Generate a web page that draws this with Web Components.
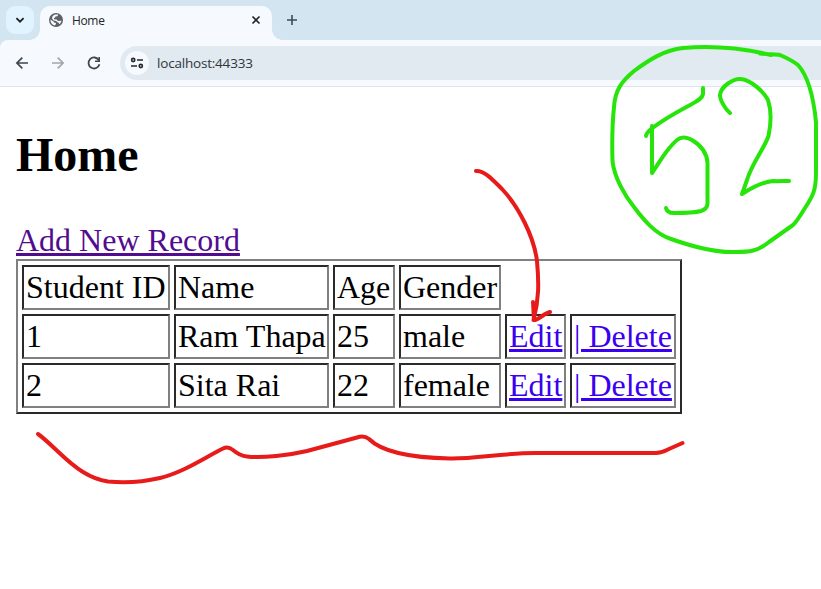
<!DOCTYPE html>
<html lang="en">
<head>
<meta charset="utf-8">
<title>Home</title>
<style>
html,body{margin:0;width:821px;height:589px;overflow:hidden;background:#fff}
</style>
</head>
<body>
<student-screen></student-screen>
<script>
const define = (name, html) => {
  const t = document.createElement('template');
  t.innerHTML = html;
  customElements.define(name, class extends HTMLElement {
    constructor() {
      super();
      this.attachShadow({mode: 'open'}).appendChild(t.content.cloneNode(true));
    }
  });
};

define('browser-tab', `
<style>
:host{display:flex;align-items:center;position:relative;box-sizing:border-box;width:232px;height:34px;padding:0 9px 6px;background:#f6fafe;border-radius:10px 10px 0 0;color:#1f2327}
:host::before,:host::after{content:"";position:absolute;bottom:0;width:10px;height:10px}
:host::before{left:-10px;background:radial-gradient(circle at 0 0,transparent 9.5px,#f6fafe 10px)}
:host::after{right:-10px;background:radial-gradient(circle at 100% 0,transparent 9.5px,#f6fafe 10px)}
svg{display:block}
.title{flex:1;margin-left:9px;padding-top:2px;font:12px/16px "Open Sans",sans-serif;letter-spacing:-.35px}
.close{margin-right:2px}
</style>
<svg width="14" height="14" viewBox="0 0 14 14"><circle cx="7" cy="7" r="7" fill="#5c6166"/><path d="M1.4 6.6 4.5 8.6 5.1 9.6 7 10.1 6.9 11.1 6 12.6 C3 12 1.3 9.6 1.4 6.6ZM6.1 1.6 C8 1.3 8.6 1.4 9.3 1.8 L8.3 3.2 6.5 3.5 5.9 4.8 4.8 5.3 5 6.3 7.7 6.4 8.5 7.7 10.4 8 12.4 7.5 C12.3 9 11.5 10.4 10.3 11.3 L9.7 9.7 8 9.1 7.3 8 4.5 7.6 2.9 5.2 C3.4 3.3 4.5 2.1 6.1 1.6Z" fill="#f6fafe"/></svg>
<span class="title"><slot></slot></span>
<svg class="close" width="10" height="10" viewBox="0 0 10 10"><path d="M1.5 1.5l7 7m0-7l-7 7" stroke="#24282c" stroke-width="1.7"/></svg>`);

define('tab-strip', `
<style>
:host{display:flex;box-sizing:border-box;height:40px;padding:6px 0 0 6px;background:#d3e5f1}
.search{width:28px;height:28px;border-radius:9px;background:#e1f3ff;margin-right:6px;display:grid;place-items:center}
.add{margin:8px 0 0 14px}
svg{display:block}
</style>
<div class="search"><svg width="10" height="8" viewBox="0 0 10 8"><path d="M1.4 2.2 5 5.7 8.6 2.2" fill="none" stroke="#1c2024" stroke-width="1.8"/></svg></div>
<slot></slot>
<svg class="add" width="12" height="12" viewBox="0 0 12 12"><path d="M6 1v10M1 6h10" stroke="#414b52" stroke-width="1.6"/></svg>`);

define('address-bar', `
<style>
:host{display:flex;align-items:center;flex:1;height:34px;box-sizing:border-box;padding-left:5px;border-radius:17px 0 0 17px;background:#e0eaf0}
.site{width:24px;height:24px;border-radius:50%;background:#f6fafe;display:grid;place-items:center}
.url{margin-left:8px;font:13.5px/20px "Open Sans",sans-serif;letter-spacing:-.2px;color:#30363c}
</style>
<div class="site"><svg width="14" height="12" viewBox="0 0 14 12" fill="none" stroke="#24282c" stroke-width="1.6"><circle cx="3.2" cy="3" r="1.6"/><path d="M7 3h6M1 9h6"/><circle cx="10.8" cy="9" r="1.6"/></svg></div>
<span class="url"><slot></slot></span>`);

define('tool-bar', `
<style>
:host{display:block;background:#d3e5f1}
.bar{display:flex;align-items:center;height:46px;border-bottom:1px solid #dce5ed;background:#f6fafe;border-radius:8px 0 0 0;padding-left:14px}
svg{display:block;margin-right:20px}
.last{margin-right:18px}
</style>
<div class="bar">
<svg width="16" height="16" viewBox="0 0 16 16" fill="none" stroke="#3c474f" stroke-width="1.7"><path d="M14 8H3M8.3 2.6 2.9 8l5.4 5.4"/></svg>
<svg width="16" height="16" viewBox="0 0 16 16" fill="none" stroke="#a1a7ac" stroke-width="1.7"><path d="M2 8h11M7.7 2.6 13.1 8l-5.4 5.4"/></svg>
<svg class="last" width="16" height="16" viewBox="0 0 16 16"><path d="M12.8 5.2A5.5 5.5 0 1 0 13.4 9.2" fill="none" stroke="#3c474f" stroke-width="1.8"/><path d="M14 2v5H9V5.4h3.4V2Z" fill="#3c474f"/></svg>
<slot></slot></div>`);

define('page-link', `
<style>:host{display:inline;color:#3a00f0;text-decoration:underline;text-decoration-thickness:3px;text-underline-offset:2px}:host([visited]){color:#520c8f}</style><slot></slot>`);

define('table-cell', `
<style>:host{display:block;box-sizing:border-box;height:45px;padding:2px;white-space:nowrap;border:2px solid;border-color:#2a2a2a #808080 #808080 #2a2a2a}:host([blank]){border-color:transparent}</style><slot></slot>`);

define('record-table', `
<style>:host{display:grid;box-sizing:border-box;width:666px;grid-template-columns:148px 155px 62px 102px 61px 106px;gap:4px;padding:4px;border:2px solid;border-color:#808080 #2a2a2a #2a2a2a #808080}</style><slot></slot>`);

define('ink-notes', `
<style>:host{position:absolute;inset:0;pointer-events:none}svg{display:block}</style>
<svg width="821" height="589" viewBox="0 0 821 589" fill="none" stroke-width="4" stroke-linecap="round" stroke-linejoin="round">
<g stroke="#e81b1b">
<path d="M476 171C484 170 493 180 502 189C519 207 534 237 537 261C539 283 539 300 533.500 320M533 302 534 320C537 321 543 314 550 312"/>
<path d="M38 434C52 444 66 462 83 472C91 477 98 480 108 481.500C124 483 143 482 160 478C184 472 204 458 223 448.500Q228 446 233 450Q240 456 247 456.500C262 458.500 290 455 307 451L357 437.500Q364 435 369 439C385 455 423 458 450 458.500C475 459 503 453 535 453L656 453C662 453 665 451 669 449L682.500 443"/>
</g>
<g stroke="#27e50b">
<path d="M771 55C742 48 710 45.500 683 48C664 50 649 60 634 71C622 81 615 90 614 107C612 126 612 144 612.500 161C614 177 625 196 634 207C643 219 655 234 671 239C688 245 710 252 731 252C750 252.500 758 251 769 242L793 225C798 220 801 214 805 208C813 196 816 190 816 173V122C814 102 809 77 798 65C793 61 787 58 780 55C776 54 771 54.500 760 53.500"/>
<path d="M703 88V94C702 99 697 101 692 104C675 113 661 121 650 130Q646 134 646 136M652 126V173C659 163 667 148 677 140Q683 135 692 140C702 146 707 153 707.500 163V204Q707 209 701 211C694 213 683 213 674 213Q667 213 666 208"/>
<path d="M730 113C725 109 720 100 720 95C721 86 734 78 741 79C751 80 764 92 768 100C772 112 771 124 768.500 136C764 149 752 163 747 180L742 194C748 190 761 182 773 181C780 181.500 784 180.500 789 181"/>
</g></svg>`);

define('student-screen', `
<style>
:host{display:block;position:relative;width:821px;height:589px;overflow:hidden;background:#fff}
main{padding:40px 16px 0;font:32px/37px "Liberation Serif",serif;color:#000}
h2{font-size:48px;line-height:55px;margin:0 0 40px}
.add{height:37px}
</style>
<tab-strip><browser-tab>Home</browser-tab></tab-strip>
<tool-bar><address-bar>localhost:44333</address-bar></tool-bar>
<main>
<h2>Home</h2>
<div class="add"><page-link visited>Add New Record</page-link></div>
<record-table>
<table-cell>Student ID</table-cell><table-cell>Name</table-cell><table-cell>Age</table-cell><table-cell>Gender</table-cell><table-cell blank></table-cell><table-cell blank></table-cell>
<table-cell>1</table-cell><table-cell>Ram Thapa</table-cell><table-cell>25</table-cell><table-cell>male</table-cell><table-cell><page-link>Edit</page-link></table-cell><table-cell><page-link>| Delete</page-link></table-cell>
<table-cell>2</table-cell><table-cell>Sita Rai</table-cell><table-cell>22</table-cell><table-cell>female</table-cell><table-cell><page-link>Edit</page-link></table-cell><table-cell><page-link>| Delete</page-link></table-cell>
</record-table>
</main>
<ink-notes></ink-notes>`);
</script>
</body>
</html>
